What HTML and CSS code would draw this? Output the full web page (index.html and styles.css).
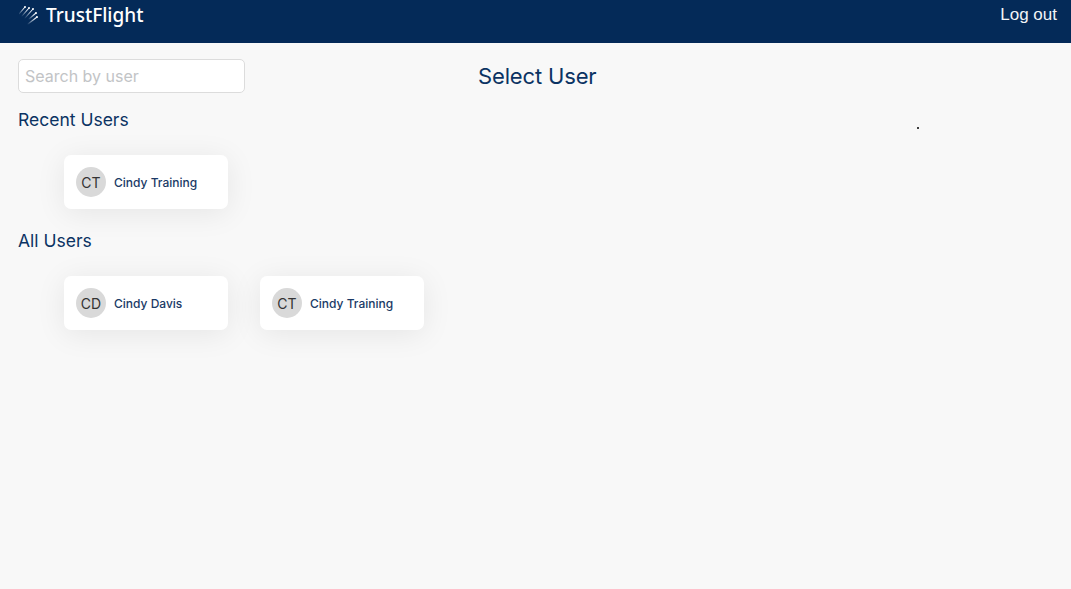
FILE: index.html

```html
<!DOCTYPE html>
<html lang="en">
<head>
  <meta charset="UTF-8" />
  <meta name="viewport" content="width=device-width, initial-scale=1.0" />
  <title>Select User</title>
  <link rel="stylesheet" href="styles.css">
</head>
<body>
  <header class="topbar">
    <div class="brand">
      <svg class="brand-mark" viewBox="0 0 20 20" width="20" height="20" aria-hidden="true">
        <defs>
          <linearGradient id="streak" x1="1" y1="0" x2="0" y2="1">
            <stop offset="0" stop-color="#ffffff" />
            <stop offset=".3" stop-color="#d5deea" />
            <stop offset="1" stop-color="#cfd9e6" stop-opacity=".1" />
          </linearGradient>
        </defs>
        <g stroke="url(#streak)" stroke-width="1.1" stroke-linecap="round" fill="none">
          <path d="M6 2 L0 9" />
          <path d="M10 3 L3 11" />
          <path d="M14 4 L6 13" />
          <path d="M17 8 L10 14" />
          <path d="M18 12 L9 19" />
        </g>
        <g fill="#ffffff">
          <circle cx="6" cy="2" r=".9" />
          <circle cx="10" cy="3" r=".9" />
          <circle cx="14" cy="4" r=".9" />
          <circle cx="17" cy="8" r=".9" />
          <circle cx="18" cy="12" r=".9" />
        </g>
      </svg>
      <span class="brand-name">TrustFlight</span>
    </div>
    <a class="logout" href="#">Log out</a>
  </header>

  <main class="content">
    <div class="top-row">
      <input class="search" type="text" placeholder="Search by user" />
      <h1 class="page-title">Select User</h1>
    </div>

    <h2 class="section-title">Recent Users</h2>
    <div class="user-list">
      <div class="user-card">
        <span class="avatar">CT</span>
        <span class="user-name">Cindy Training</span>
      </div>
    </div>

    <h2 class="section-title">All Users</h2>
    <div class="user-list">
      <div class="user-card">
        <span class="avatar">CD</span>
        <span class="user-name">Cindy Davis</span>
      </div>
      <div class="user-card">
        <span class="avatar">CT</span>
        <span class="user-name">Cindy Training</span>
      </div>
    </div>
  </main>

  <span class="speck"></span>
</body>
</html>
```

FILE: styles.css

```css
* { box-sizing: border-box; }
html, body { height: 100%; }
body { margin: 0; background: #f8f8f8; font-family: Inter, "Liberation Sans", sans-serif; color: #0b3363; overflow: hidden; }

.topbar { height: 43px; background: #042a58; display: flex; justify-content: space-between; align-items: flex-start; padding: 5px 14px 0 19px; color: #fff; }
.brand { display: flex; align-items: center; gap: 7px; }
.brand-mark { display: block; }
.brand-name { font-family: "Noto Sans", sans-serif; font-size: 19px; font-weight: 500; line-height: 20px; }
.logout { color: #f2f4f7; text-decoration: none; font-size: 17px; line-height: 20px; font-family: "Liberation Sans", sans-serif; }

.content { padding: 16px 18px; }
.top-row { display: flex; align-items: center; }
.search { width: 227px; height: 34px; padding: 0 6px; border: 1px solid #dcdcdc; border-radius: 5px; background: #fff; font-family: inherit; font-size: 16px; color: #333; outline: none; }
.search::placeholder { color: #c2c4c6; }
.page-title { margin: 0 0 0 233px; font-size: 22px; font-weight: 400; letter-spacing: -.15px; line-height: 34px; }

.section-title { margin: 16px 0 0; font-size: 17.5px; font-weight: 400; line-height: 22px; }
.user-list { display: flex; gap: 32px; padding: 24px 0 0 46px; margin-bottom: 21px; }
.user-card { width: 164px; height: 54px; display: flex; align-items: center; gap: 8px; padding-left: 12px; background: #fff; border-radius: 7px; box-shadow: 0 4px 30px rgba(0, 0, 0, .08); }
.avatar { width: 30px; height: 30px; border-radius: 50%; background: #d9d9d9; color: #333; display: flex; align-items: center; justify-content: center; font-size: 14px; }
.user-name { font-size: 12px; font-weight: 500; color: #1a3a66; }

.speck { position: absolute; left: 917px; top: 127px; width: 2px; height: 2px; border-radius: 50%; background: #000; }
```
